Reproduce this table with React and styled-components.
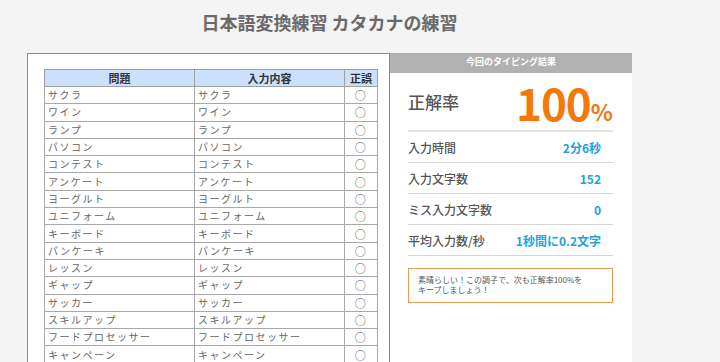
import React from 'react';
import styled, { createGlobalStyle } from 'styled-components';

const GlobalStyle = createGlobalStyle`
    body {
        margin: 0;
        background-color: #f4f4f4;
        font-family: "Noto Sans CJK JP", "Noto Sans", sans-serif;
        color: #555;
    }
`

const Page = styled.div`
    width: 605px;
    margin-left: 27px;
`

const Title = styled.h1`
    margin: 0;
    height: 53px;
    padding-top: 8px;
    box-sizing: border-box;
    font-size: 18px;
    font-weight: bold;
    color: #6a6a6a;
    text-align: center;
    line-height: 28px;
`

const Columns = styled.div`
    display: flex;
    align-items: stretch;
    height: 320px;
`

const Sheet = styled.div`
    width: 363px;
    box-sizing: border-box;
    background-color: white;
    border: 1px solid #8a8a8a;
    border-bottom: none;
    padding: 15px 15px 0 16px;
`

const Table = styled.table`
    width: 330px;
    border-collapse: collapse;
    table-layout: fixed;
    font-size: 10px;
    letter-spacing: 1.5px;
    color: #666;
`

const Th = styled.th`
    height: 16px;
    padding: 0;
    background-color: #cde0fb;
    border: 1px solid #a0a0a0;
    font-size: 11px;
    font-weight: bold;
    letter-spacing: 0;
    color: #333;
    width: ${p => p.$w}px;
`

const Td = styled.td`
    height: 16.3px;
    padding: 0 0 0 3px;
    border: 1px solid #a8a8a8;
    line-height: 14px;
    white-space: nowrap;
    overflow: hidden;
    text-align: ${p => (p.$center ? 'center' : 'left')};
    ${p => p.$center && 'padding: 0; font-size: 11px; color: #555;'}
`

const Result = styled.div`
    width: 242px;
    background-color: white;
`

const ResultHead = styled.div`
    height: 20px;
    background-color: #b1b1b1;
    color: white;
    font-size: 9px;
    font-weight: bold;
    text-align: center;
    line-height: 17px;
`

const ResultBody = styled.div`
    padding: 0 19px 0 18px;
`

const Score = styled.div`
    display: flex;
    justify-content: space-between;
    align-items: center;
    height: 57px;
    border-bottom: 2px solid #e2e2e2;
`

const ScoreLabel = styled.span`
    font-size: 17px;
    color: #555;
    font-weight: 500;
`

const ScoreValue = styled.span`
    font-size: 44px;
    font-weight: bold;
    color: #f27a0c;
    line-height: 1;
    letter-spacing: -1px;

    small {
        font-size: 23px;
        letter-spacing: 0;
    }
`

const Row = styled.div`
    display: flex;
    justify-content: space-between;
    align-items: center;
    height: 30px;
    padding-right: 12px;
    border-bottom: 1px solid #d6d6d6;
    font-size: 12px;
`

const Label = styled.span`
    color: #555;
    font-weight: 500;
`

const Value = styled.span`
    color: #24a3d8;
    font-weight: bold;
`

const Message = styled.div`
    margin-top: 12px;
    height: 35px;
    box-sizing: border-box;
    border: 1.5px solid #e59b52;
    padding: 6px 9px;
    font-size: 8px;
    line-height: 10px;
    color: #555;
`

const words = [
    'サクラ', 'ワイン', 'ランプ', 'パソコン', 'コンテスト', 'アンケート',
    'ヨーグルト', 'ユニフォーム', 'キーボード', 'パンケーキ', 'レッスン',
    'ギャップ', 'サッカー', 'スキルアップ', 'フードプロセッサー', 'キャンペーン',
]

const stats = [
    ['入力時間', '2分6秒'],
    ['入力文字数', '152'],
    ['ミス入力文字数', '0'],
    ['平均入力数/秒', '1秒間に0.2文字'],
]

export default function App() {
    return (
        <Page>
            <GlobalStyle />
            <Title>日本語変換練習 カタカナの練習</Title>
            <Columns>
                <Sheet>
                    <Table>
                        <thead>
                            <tr>
                                <Th $w={149}>問題</Th>
                                <Th $w={149}>入力内容</Th>
                                <Th $w={32}>正誤</Th>
                            </tr>
                        </thead>
                        <tbody>
                            {words.map(w => (
                                <tr key={w}>
                                    <Td>{w}</Td>
                                    <Td>{w}</Td>
                                    <Td $center>○</Td>
                                </tr>
                            ))}
                        </tbody>
                    </Table>
                </Sheet>
                <Result>
                    <ResultHead>今回のタイピング結果</ResultHead>
                    <ResultBody>
                        <Score>
                            <ScoreLabel>正解率</ScoreLabel>
                            <ScoreValue>100<small>%</small></ScoreValue>
                        </Score>
                        {stats.map(([k, v]) => (
                            <Row key={k}>
                                <Label>{k}</Label>
                                <Value>{v}</Value>
                            </Row>
                        ))}
                        <Message>
                            素晴らしい！この調子で、次も正解率100%を<br />
                            キープしましょう！
                        </Message>
                    </ResultBody>
                </Result>
            </Columns>
        </Page>
    );
}
